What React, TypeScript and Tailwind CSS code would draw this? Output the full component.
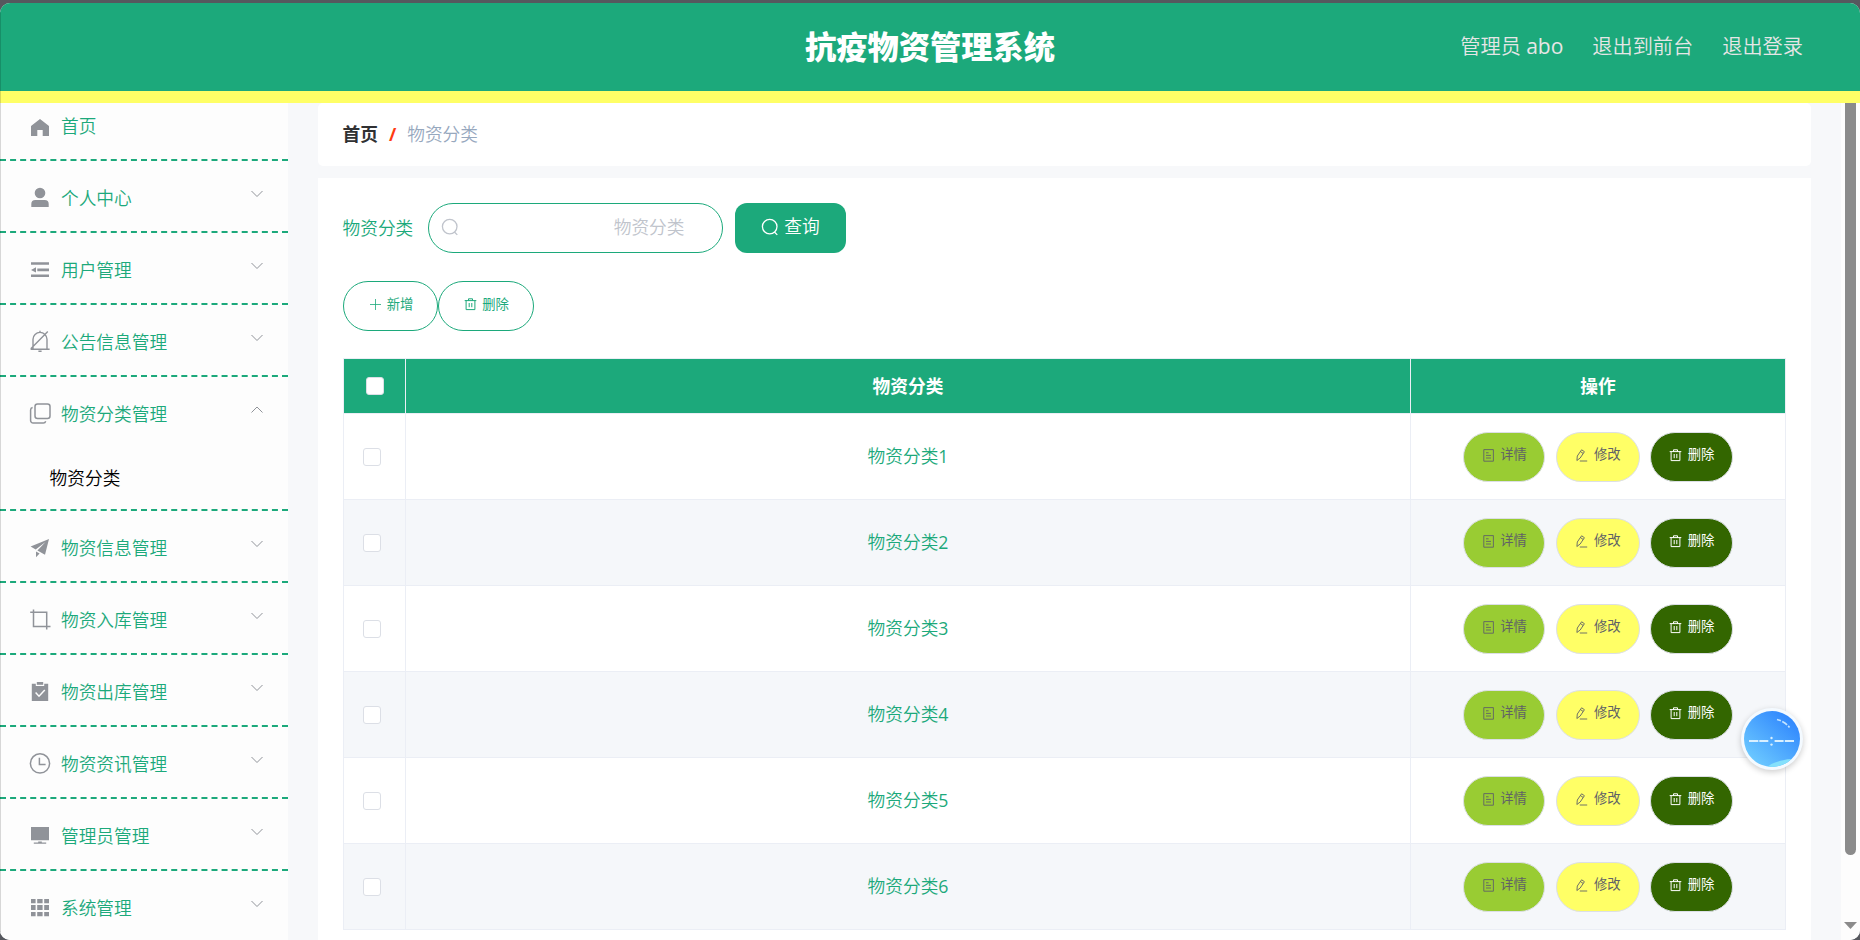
import type { ReactNode } from 'react';

const icons: Record<string, ReactNode> = {
  home: <path d="M3 12 12 5l9 7v10h-6.3v-6H9.3v6H3z" fill="currentColor" />,
  user: (
    <g fill="currentColor">
      <circle cx="12" cy="7" r="5.3" />
      <path d="M3.3 21v-3a4 4 0 0 1 4-4h9.4a4 4 0 0 1 4 4v3z" />
    </g>
  ),
  fold: <path d="M3 4.2h18v2.6H3zM9.3 10.6H21v2.6H9.3zM3 16.4h18V19H3zM3 11.9l5-2.7v5.4z" fill="currentColor" />,
  bell: (
    <g fill="none" stroke="currentColor" strokeWidth="1.4">
      <path d="M5 19V9.2a7 6.8 0 0 1 14 0V19M2.6 19.2h19M12 .8v1.6M10.4 21.2h3.2M2.8 18.8 19.8 1.6" />
    </g>
  ),
  copy: (
    <g fill="none" stroke="currentColor" strokeWidth="1.5">
      <rect x="7" y="2" width="15" height="14.6" rx="2.5" />
      <path d="M4.6 5.6a2.6 2.6 0 0 0-2 2.5v10.4a2.5 2.5 0 0 0 2.5 2.5h10.3a2.5 2.5 0 0 0 2.3-1.8" />
    </g>
  ),
  promotion: <path d="M21 3 2.6 10.6l5.1 2.8L17.5 6 9.4 14.6l7.6 4.2zM8 15.6v5.6l3.6-3.6z" fill="currentColor" />,
  crop: (
    <path d="M5.5 1.4v17.2h17M2.2 4.3h16.5v17.2" fill="none" stroke="currentColor" strokeWidth="1.5" />
  ),
  order: (
    <>
      <path d="M3.8 3.7h4v2.2h8.4V3.7h4V21H3.8z" fill="currentColor" />
      <path d="M8.8 2h6.4v2.8H8.8z" fill="currentColor" />
      <path d="m7.6 12.6 3.4 3.6 5.8-6.2" fill="none" stroke="#fdfdfd" strokeWidth="1.5" />
    </>
  ),
  clock: (
    <g fill="none" stroke="currentColor" strokeWidth="1.5">
      <circle cx="12" cy="11.4" r="9.6" />
      <path d="M11.4 5.8v6.6h6.2" />
    </g>
  ),
  monitor: <path d="M3 3h18v13.2H3zM10.2 17.4h3.6v1h4.4v1.4H5.8v-1.4h4.4z" fill="currentColor" />,
  grid: (
    <path
      d="M3 3h4.6v4.3H3zM9.2 3h5.4v4.3H9.2zM16.2 3h4.8v4.3h-4.8zM3 9h4.6v5H3zM9.2 9h5.4v5H9.2zM16.2 9h4.8v5h-4.8zM3 16h4.6v4.2H3zM9.2 16h5.4v4.2H9.2zM16.2 16h4.8v4.2h-4.8z"
      fill="currentColor"
    />
  ),
};

const menus = [
  { icon: 'user', label: '个人中心' },
  { icon: 'fold', label: '用户管理' },
  { icon: 'bell', label: '公告信息管理' },
  { icon: 'copy', label: '物资分类管理', children: ['物资分类'] },
  { icon: 'promotion', label: '物资信息管理' },
  { icon: 'crop', label: '物资入库管理' },
  { icon: 'order', label: '物资出库管理' },
  { icon: 'clock', label: '物资资讯管理' },
  { icon: 'monitor', label: '管理员管理' },
  { icon: 'grid', label: '系统管理' },
];

const rows = ['物资分类1', '物资分类2', '物资分类3', '物资分类4', '物资分类5', '物资分类6'];

function SearchIcon({ className }: { className: string }) {
  return (
    <svg viewBox="0 0 18 18" className={className} fill="none" stroke="currentColor" strokeWidth="1.3">
      <circle cx="8.7" cy="8.6" r="7.3" />
      <path d="m13.4 14 2.9 2.9" />
    </svg>
  );
}

function TrashIcon() {
  return (
    <svg viewBox="0 0 13 13" className="size-[13px] shrink-0" fill="none" stroke="currentColor">
      <path d="M.7 2.6h11.6M4.5 2.6V.8h4v1.8M2.1 2.6v9h8.8v-9M5.2 5v4.2M7.8 5v4.2" />
    </svg>
  );
}

function MenuTitle({ icon, label, arrow }: { icon: string; label: string; arrow?: 'up' | 'down' }) {
  return (
    <div className="flex h-[70px] items-start pl-[28.4px] pr-[23.6px]">
      <svg viewBox="0 0 24 24" className="mt-[25px] size-6 shrink-0 text-[#909399]">
        {icons[icon]}
      </svg>
      <span className="ml-[8.6px] mt-[24px] flex-1 leading-[26px] text-[#1ca97b]">{label}</span>
      {arrow && (
        <svg viewBox="0 0 14 8" className="mt-[29px] h-2 w-3.5 text-[#909399]" fill="none" stroke="currentColor">
          <path d={arrow === 'down' ? 'm1.5 1 5.5 5.5L12.5 1' : 'M1.5 6.5 7 1l5.5 5.5'} />
        </svg>
      )}
    </div>
  );
}

function Sidebar() {
  return (
    <aside className="w-[288px] shrink-0 overflow-hidden bg-[#fdfdfd]">
      <ul className="-mt-[14px]">
        <li className="border-b-2 border-dashed border-[#1ca97b]">
          <MenuTitle icon="home" label="首页" />
        </li>
        {menus.map((menu) => (
          <li key={menu.label} className="border-b-2 border-dashed border-[#1ca97b]">
            <MenuTitle icon={menu.icon} label={menu.label} arrow={menu.children ? 'up' : 'down'} />
            {menu.children?.map((child) => (
              <div key={child} className="h-[62px] pl-[49.6px] pt-[18px] leading-[26px] text-black">
                {child}
              </div>
            ))}
          </li>
        ))}
      </ul>
    </aside>
  );
}

function RowActions() {
  return (
    <div className="flex justify-center gap-[10.5px] pr-px font-['Open_Sans','Noto_Sans_CJK_SC',sans-serif] text-[13.33px] leading-none text-[#606266]">
      <button className="flex h-[50px] w-[82.5px] items-center justify-center gap-[5.5px] rounded-[25px] border border-[#dcdfe6] bg-[#99cc33] pb-[3px] pl-px">
        <svg viewBox="0 0 13 13" className="size-[13px]" fill="none" stroke="currentColor" strokeWidth=".9">
          <path d="M1.8.6h9.6v11.6H1.8zM4 3.8h2.6M4 6.4h5M4 9h5" />
        </svg>
        详情
      </button>
      <button className="flex h-[50px] w-[84px] items-center justify-center gap-[5.5px] rounded-[25px] border border-[#dcdfe6] bg-[#ffff66] pb-[3px] pl-px">
        <svg viewBox="0 0 13 13" className="size-[13px]" fill="none" stroke="currentColor" strokeWidth=".9">
          <path d="m2.3 7 4.3-6.2 2.8 1.9L5.2 9l-3.3 2.5zM5.4 2.5l2.8 2M4.8 12h7.4" />
        </svg>
        修改
      </button>
      <button className="flex h-[50px] w-[82.5px] items-center justify-center gap-[5.5px] rounded-[25px] border border-[#dcdfe6] bg-[#336600] pb-[3px] pl-px text-white">
        <TrashIcon />
        删除
      </button>
    </div>
  );
}

function CategoryTable() {
  return (
    <table className="mt-[27px] w-[1443px] table-fixed border-collapse border border-[#ebeef5] text-center">
      <colgroup>
        <col className="w-[62px]" />
        <col className="w-[1005px]" />
        <col className="w-[375px]" />
      </colgroup>
      <thead>
        <tr className="h-[55px] bg-[#1ca97b] font-['Open_Sans','Noto_Sans_CJK_SC',sans-serif] font-bold text-white">
          <th className="border border-[#ebeef5] p-0">
            <span className="ml-[22px] block size-[17.5px] rounded-[3px] border border-[#dcdfe6] bg-white" />
          </th>
          <th className="border border-[#ebeef5] p-0">物资分类</th>
          <th className="border border-[#ebeef5] p-0">操作</th>
        </tr>
      </thead>
      <tbody>
        {rows.map((name) => (
          <tr key={name} className="h-[86px] even:bg-[#f5f7fa]">
            <td className="border border-[#ebeef5] p-0">
              <span className="ml-[19px] block size-[18px] rounded-[3px] border border-[#dcdfe6] bg-white" />
            </td>
            <td className="border border-[#ebeef5] p-0 pb-px text-[#1ca97b]">{name}</td>
            <td className="border border-[#ebeef5] p-0">
              <RowActions />
            </td>
          </tr>
        ))}
      </tbody>
    </table>
  );
}

function ClockBubble() {
  return (
    <div className="absolute left-[1741px] top-[708px] size-[62px] rounded-full bg-[#f4faff] p-[3px] shadow-[0_2px_6px_rgba(0,0,0,0.2)]">
      <svg viewBox="0 0 56 56" className="size-full">
        <defs>
          <linearGradient id="sky" x1="0.85" y1="0.1" x2="0.15" y2="0.9">
            <stop offset="0" stopColor="#2f86fd" />
            <stop offset="1" stopColor="#6cc9ff" />
          </linearGradient>
          <clipPath id="disc">
            <circle cx="28" cy="28" r="28" />
          </clipPath>
        </defs>
        <g clipPath="url(#disc)">
          <rect width="56" height="56" fill="url(#sky)" />
          <ellipse cx="41" cy="58" rx="22" ry="9" fill="#84e0fb" transform="rotate(-12 41 58)" />
        </g>
        <path d="M33 8.5q8 2 12.5 8" fill="none" stroke="#c3e4ff" strokeWidth="1.6" strokeDasharray="4 1.5 6 1.5" />
        <path d="M5 30h9.3M15.3 30h9M30.6 30h9M40.8 30H50" stroke="#d8efff" strokeWidth="1.8" />
        <circle cx="27.5" cy="27" r="1.2" fill="#d8efff" />
        <circle cx="27.5" cy="33.6" r="1.2" fill="#d8efff" />
      </svg>
    </div>
  );
}

export default function App() {
  return (
    <div className="relative h-[940px] w-[1860px] overflow-hidden bg-[#56585e] pt-[3px] font-['Open_Sans','Noto_Sans_CJK_SC_DemiLight','Noto_Sans_CJK_SC',sans-serif] text-[17.7px]">
      <div className="flex h-[937px] flex-col overflow-hidden rounded-[10px] bg-[#f7f8fa]">
        <header className="grid h-[88px] shrink-0 grid-cols-[1fr_auto_1fr] items-center bg-[#1ca97b]">
          <h1 className="col-start-2 pt-[2px] font-['Open_Sans','Noto_Sans_CJK_SC',sans-serif] text-[31.25px] font-black leading-none text-white">
            抗疫物资管理系统
          </h1>
          <div className="flex justify-end gap-[29px] pb-px pr-[57px] text-[20.2px] leading-none text-[#e6e6e6]">
            <span>
              管理员 <span className="text-[21px]">abo</span>
            </span>
            <span>退出到前台</span>
            <span>退出登录</span>
          </div>
        </header>
        <div className="h-3 shrink-0 bg-[#ffff66]" />

        <div className="flex min-h-0 flex-1">
          <Sidebar />
          <main className="flex min-w-0 flex-1 flex-col gap-3 pl-[30px] pr-[30px]">
            <div className="flex h-[63px] shrink-0 items-center rounded-[5px] bg-white pl-[24.5px]">
              <span className="font-['Open_Sans','Noto_Sans_CJK_SC',sans-serif] font-bold text-[#303133]">首页</span>
              <span className="mx-[11px] font-bold text-[#ff3b11]">/</span>
              <span className="text-[#97a8be]">物资分类</span>
            </div>

            <div className="flex-1 overflow-hidden bg-white pl-[25px] pt-[25px]">
              <div className="flex h-[50px] items-center">
                <span className="-ml-[.5px] text-[#1ca97b]">物资分类</span>
                <div className="ml-[14.7px] flex h-[50px] w-[295px] items-center justify-between rounded-[25px] border border-[#1ca97b] pb-[2px] pl-[12px] pr-[37.5px] text-[#c0c4cc]">
                  <SearchIcon className="size-[18px]" />
                  <span>物资分类</span>
                </div>
                <button className="ml-3 flex h-[50px] w-[111px] items-center justify-center gap-[5px] rounded-[12px] bg-[#1ca97b] pb-[3px] text-white">
                  <SearchIcon className="size-[18px]" />
                  查询
                </button>
              </div>

              <div className="mt-[28px] flex font-['Open_Sans','Noto_Sans_CJK_SC',sans-serif] text-[13.33px] leading-none text-[#1ca97b]">
                <button className="flex h-[50px] w-[95px] items-center justify-center gap-[5px] rounded-[25px] border border-[#1ca97b] pb-[3px] pl-px">
                  <svg viewBox="0 0 13 13" className="size-[13px]" stroke="currentColor" strokeWidth=".8">
                    <path d="M1 6.5h11M6.5 1v11" />
                  </svg>
                  新增
                </button>
                <button className="flex h-[50px] w-[96px] items-center justify-center gap-[5px] rounded-[25px] border border-[#1ca97b] pb-[3px] pl-px">
                  <TrashIcon />
                  删除
                </button>
              </div>

              <CategoryTable />
            </div>
          </main>

          <div className="flex w-[19px] shrink-0 flex-col items-center justify-between bg-[#fdfdfd] pb-[11px]">
            <div className="h-[752px] w-[11px] rounded-b-[6px] bg-[#8b8b8b]" />
            <svg viewBox="0 0 13 7" className="h-[7px] w-[13px]">
              <path d="M0 0h13L6.5 7z" fill="#8b8b8b" />
            </svg>
          </div>
        </div>
      </div>
      <div className="absolute bottom-2 left-0 top-[12px] w-px bg-black/15" />
      <ClockBubble />
    </div>
  );
}
